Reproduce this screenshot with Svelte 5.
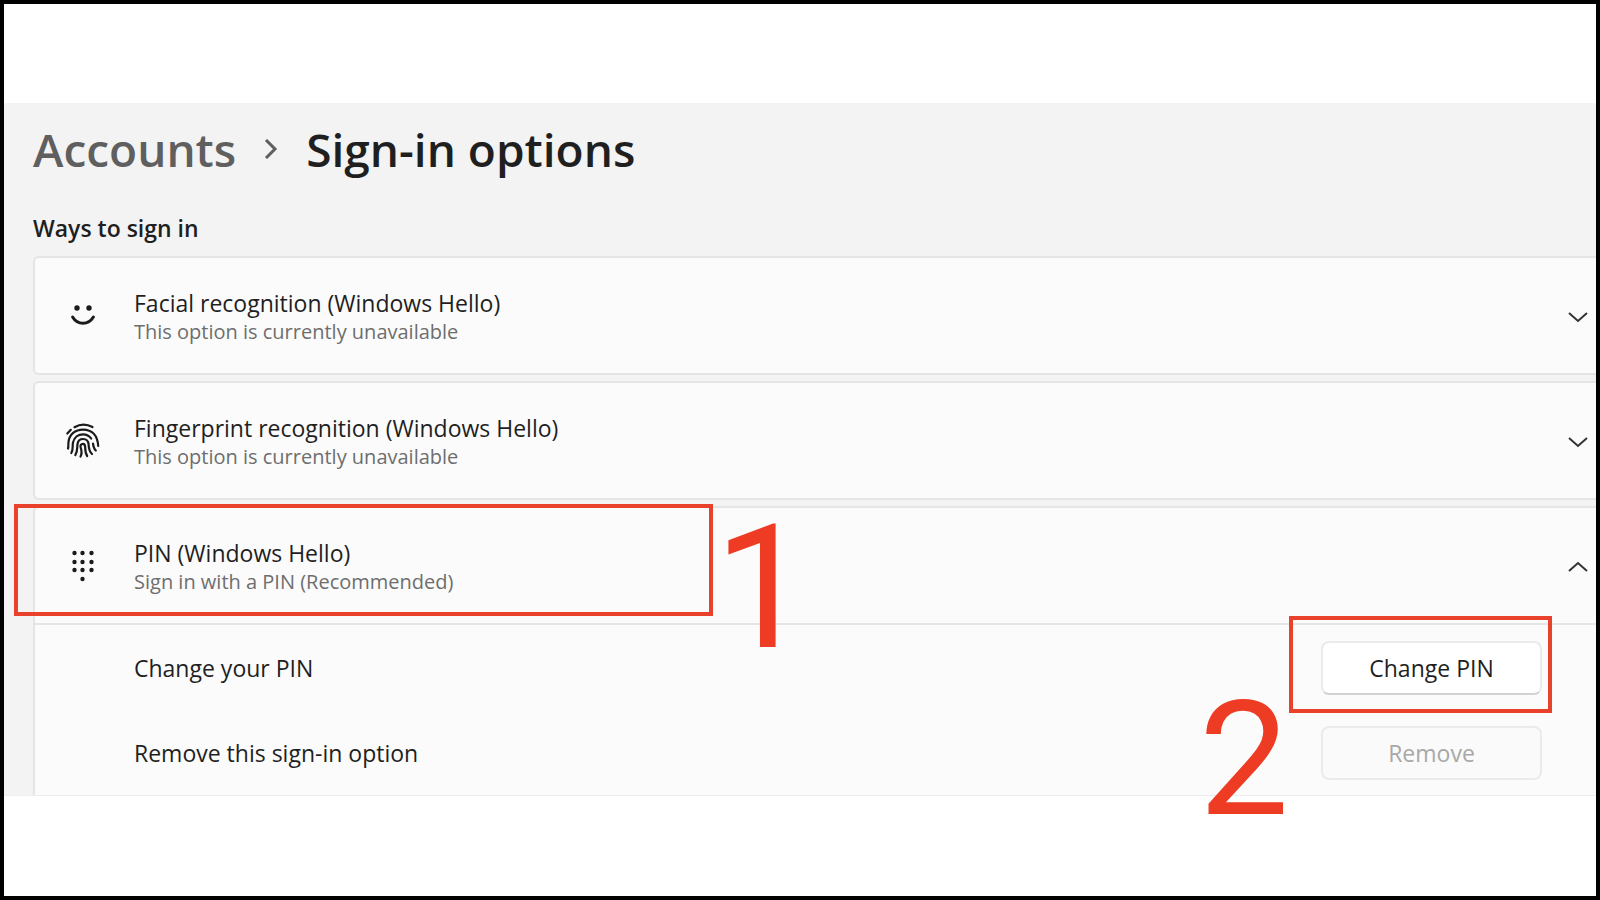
<script>
  const options = [
    { id: 'face', title: 'Facial recognition (Windows Hello)', note: 'This option is currently unavailable' },
    { id: 'finger', title: 'Fingerprint recognition (Windows Hello)', note: 'This option is currently unavailable' },
    { id: 'pin', title: 'PIN (Windows Hello)', note: 'Sign in with a PIN (Recommended)' }
  ];
  const keys = [
    [4, 4], [12, 4], [21, 4],
    [4, 13], [12, 13], [21, 13],
    [4, 21], [12, 21], [21, 21],
    [12, 30]
  ];
  let open = $state('pin');
  const toggle = (id) => (open = open === id ? '' : id);
</script>

<div class="frame">
  <main class="panel">
    <nav class="crumbs" aria-label="Breadcrumb">
      <a href="#accounts">Accounts</a>
      <svg width="14" height="20" viewBox="0 0 14 20" aria-hidden="true">
        <path d="M2 1 L11 10 L2 19" />
      </svg>
      <h1>Sign-in options</h1>
    </nav>

    <h2>Ways to sign in</h2>

    <div class="cards">
      {#each options as option (option.id)}
        <section class="card" class:open={open === option.id}>
          <button class="head" aria-expanded={open === option.id} onclick={() => toggle(option.id)}>
            <svg class="icon" width="40" height="40" viewBox="0 0 40 40" aria-hidden="true">
              {#if option.id === 'face'}
                <circle cx="14" cy="12" r="2.7" />
                <circle cx="26" cy="12" r="2.7" />
                <path class="smile" d="M9.600 21 C14.500 29.300 25.500 29.300 30.400 21" />
              {:else if option.id === 'finger'}
                <g class="ridges">
                  <path d="M11.500 6.200 C17 3 24 3 29.500 6" />
                  <path d="M4.300 12.500 L7.800 8.800" />
                  <path d="M5 27.500 C5.600 26 5.200 24.500 5.400 22 C6 13 12.500 8.600 20 8.600 C29 8.600 34.600 14.500 35.200 25" />
                  <path d="M8.300 32 C10.500 28.500 9.200 25 10 21.500 C11.200 16 15.500 13.300 20 13.300 C24 13.300 26.500 15 28.200 17.500" />
                  <path d="M30 22.500 C30.500 26.500 31 28 32.800 29.500" />
                  <path d="M12.300 34.200 C14.800 30.500 14 26.500 14.500 23 C15 19.800 17.300 18 20 18 C23.500 18 25.400 20.300 25.600 23.500 C25.800 28 26.800 31 29 33" />
                  <path d="M17.500 35.500 C19 33 18.500 29 17.700 26.500 C17 24.500 18 22.800 20 22.800 C22 22.800 22.200 24.500 22.200 26.500 C22.200 31 22.800 33 24.200 35" />
                </g>
              {:else}
                {#each keys as [x, y]}
                  <circle cx={x + 7.5} cy={y + 3} r="2.2" />
                {/each}
              {/if}
            </svg>
            <span class="label">
              <span class="title">{option.title}</span>
              <span class="note">{option.note}</span>
            </span>
            <svg class="chevron" width="20" height="12" viewBox="0 0 20 12" aria-hidden="true">
              <path d={open === option.id ? 'M1 10 L10 2 L19 10' : 'M1 2 L10 10 L19 2'} />
            </svg>
          </button>

          {#if option.id === 'pin'}
            <div class="mark head-mark"></div>
            <span class="step one">1</span>
            {#if open === 'pin'}
              <div class="body">
                <div class="row">
                  <span>Change your PIN</span>
                  <div class="action">
                    <button class="btn">Change PIN</button>
                    <div class="mark btn-mark"></div>
                    <span class="step two">2</span>
                  </div>
                </div>
                <div class="row">
                  <span>Remove this sign-in option</span>
                  <div class="action">
                    <button class="btn" disabled>Remove</button>
                  </div>
                </div>
              </div>
            {/if}
          {/if}
        </section>
      {/each}
    </div>
  </main>
</div>

<style>
  :global(body) {
    margin: 0;
    background: #fff;
  }

  .frame {
    box-sizing: border-box;
    min-height: 100vh;
    padding: 99px 0;
    border: 4px solid #000;
    background: #fff;
    color: #1f1f1f;
    font-family: 'Open Sans', 'Noto Sans', sans-serif;
    overflow: hidden;
  }

  .panel {
    padding: 14px 0 0 29px;
    border-bottom: 1px solid #eee;
    background: #f3f3f3;
  }

  .crumbs {
    display: flex;
    align-items: center;
    gap: 28px;
    height: 64px;
    font-size: 46px;
    font-weight: 600;
    line-height: 64px;
  }

  .crumbs a {
    color: #5f5f5f;
    text-decoration: none;
  }

  .crumbs svg {
    fill: none;
    stroke: #5f5f5f;
    stroke-width: 3;
  }

  h1 {
    margin: 0;
    font: inherit;
  }

  h2 {
    margin: 30px 0 11px;
    font-size: 23px;
    font-weight: 600;
    line-height: 34px;
  }

  .cards {
    display: flex;
    flex-direction: column;
    gap: 6px;
  }

  .card {
    position: relative;
    border: 2px solid #e5e5e5;
    border-right: 0;
    border-radius: 6px 0 0 6px;
    background: #fbfbfb;
  }

  .card.open {
    border-bottom: 0;
    border-radius: 6px 0 0 0;
  }

  .head {
    display: flex;
    align-items: center;
    width: 100%;
    height: 115px;
    padding: 0 8px 0 28px;
    border: 0;
    background: none;
    color: inherit;
    font: inherit;
    text-align: left;
  }

  .icon {
    fill: #1b1b1b;
  }

  .smile,
  .ridges {
    fill: none;
    stroke: #1b1b1b;
    stroke-width: 3;
    stroke-linecap: round;
  }

  .ridges {
    stroke-width: 2.2;
  }

  .label {
    display: flex;
    flex: 1;
    flex-direction: column;
    margin-left: 31px;
    padding-top: 2px;
  }

  .title {
    font-size: 23px;
    line-height: 30px;
  }

  .note {
    color: #6e6e6e;
    font-size: 20px;
    line-height: 28px;
  }

  .chevron {
    margin-top: 2px;
    fill: none;
    stroke: #333;
    stroke-width: 2;
  }

  .body {
    padding: 0 54px 0 99px;
    border-top: 2px solid #e5e5e5;
    font-size: 23px;
  }

  .row {
    display: flex;
    align-items: center;
    justify-content: space-between;
    height: 85px;
  }

  .action {
    position: relative;
  }

  .btn {
    display: block;
    width: 221px;
    height: 54px;
    border: 2px solid #ebebeb;
    border-bottom-color: #d2d2d2;
    border-radius: 8px;
    background: #fff;
    color: #1f1f1f;
    font: inherit;
  }

  .btn:disabled {
    border-color: #ebebeb;
    background: #fafafa;
    color: #a8a8a8;
  }

  .mark {
    position: absolute;
    box-sizing: border-box;
    border: 4px solid #e8412c;
    pointer-events: none;
  }

  .head-mark {
    top: -4px;
    left: -21px;
    width: 699px;
    height: 112px;
  }

  .btn-mark {
    inset: -25px -10px -18px -32px;
  }

  .step {
    position: absolute;
    color: #ee3b23;
    font-family: Roboto, sans-serif;
    line-height: 1;
    pointer-events: none;
  }

  .one {
    top: -6px;
    left: 679px;
    font-size: 173px;
  }

  .two {
    top: 39px;
    left: -122px;
    z-index: 1;
    font-size: 160px;
  }
</style>
